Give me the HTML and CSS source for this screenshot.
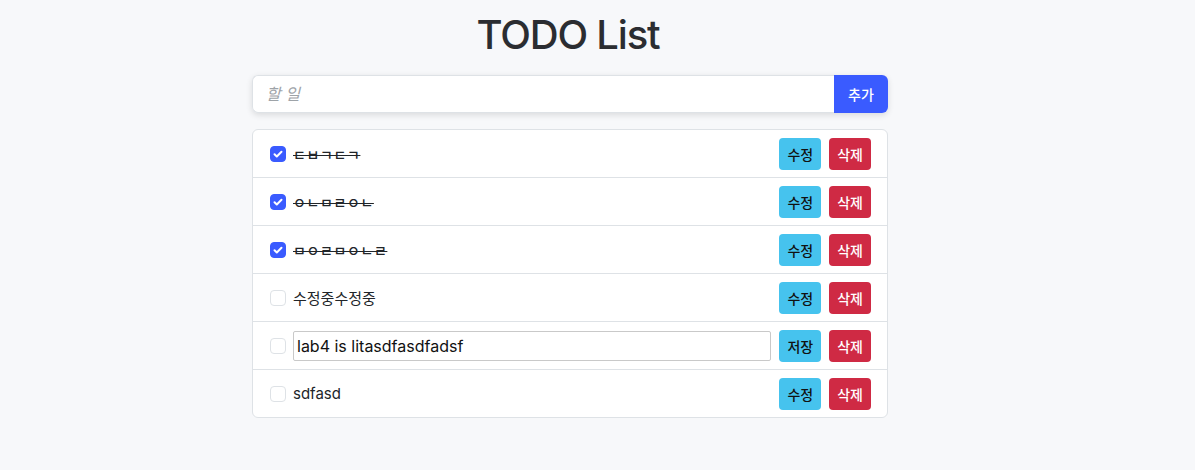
FILE: index.html
```html
<!DOCTYPE html>
<html lang="ko">
<head>
<meta charset="utf-8">
<title>TODO List</title>
<link rel="stylesheet" href="styles.css">
</head>
<body>
<main class="container">
  <h1 class="title">TODO List</h1>
  <form class="add-group">
    <input class="add-input" type="text" placeholder="할 일">
    <button class="add-btn" type="button">추가</button>
  </form>
  <ul class="todo-list">
    <li class="todo-item">
      <span class="check checked"><svg viewBox="0 0 16 16" width="16" height="16"><path d="M4.5 8.2l2.3 2.3 4.7-4.7" fill="none" stroke="#fff" stroke-width="2" stroke-linecap="round" stroke-linejoin="round"/></svg></span>
      <span class="todo-text done jamo">ㄷㅂㄱㄷㄱ</span>
      <span class="actions"><button class="btn btn-info">수정</button><button class="btn btn-danger">삭제</button></span>
    </li>
    <li class="todo-item">
      <span class="check checked"><svg viewBox="0 0 16 16" width="16" height="16"><path d="M4.5 8.2l2.3 2.3 4.7-4.7" fill="none" stroke="#fff" stroke-width="2" stroke-linecap="round" stroke-linejoin="round"/></svg></span>
      <span class="todo-text done jamo">ㅇㄴㅁㄹㅇㄴ</span>
      <span class="actions"><button class="btn btn-info">수정</button><button class="btn btn-danger">삭제</button></span>
    </li>
    <li class="todo-item">
      <span class="check checked"><svg viewBox="0 0 16 16" width="16" height="16"><path d="M4.5 8.2l2.3 2.3 4.7-4.7" fill="none" stroke="#fff" stroke-width="2" stroke-linecap="round" stroke-linejoin="round"/></svg></span>
      <span class="todo-text done jamo">ㅁㅇㄹㅁㅇㄴㄹ</span>
      <span class="actions"><button class="btn btn-info">수정</button><button class="btn btn-danger">삭제</button></span>
    </li>
    <li class="todo-item">
      <span class="check"></span>
      <span class="todo-text">수정중수정중</span>
      <span class="actions"><button class="btn btn-info">수정</button><button class="btn btn-danger">삭제</button></span>
    </li>
    <li class="todo-item">
      <span class="check"></span>
      <input class="edit-input" type="text" value="lab4 is litasdfasdfadsf">
      <span class="actions"><button class="btn btn-info">저장</button><button class="btn btn-danger">삭제</button></span>
    </li>
    <li class="todo-item">
      <span class="check"></span>
      <span class="todo-text">sdfasd</span>
      <span class="actions"><button class="btn btn-info">수정</button><button class="btn btn-danger">삭제</button></span>
    </li>
  </ul>
</main>
</body>
</html>
```
FILE: styles.css
```css
* { box-sizing: border-box; }
html, body { margin: 0; padding: 0; }
body {
  background: #f7f8fa;
  font-family: Inter, "Noto Sans CJK KR", sans-serif;
  color: #212529;
  font-size: 16px;
}
.container {
  width: 636px;
  margin-left: 252px;
  padding-top: 11px;
}
.title {
  margin: 0 0 16px;
  font-size: 40px;
  font-weight: 500;
  line-height: 48px;
  text-align: center;
  color: #2b2d31;
  letter-spacing: -1.2px;
  padding-right: 4px;
}
.add-group {
  display: flex;
  height: 38px;
  margin: 0 0 16px;
  border-radius: 6px;
  box-shadow: 0 2px 6px rgba(0,0,0,0.12);
}
.add-input {
  flex: 1;
  border: 1px solid #dee2e6;
  border-right: 0;
  border-radius: 6px 0 0 6px;
  padding: 0 13px;
  font: italic 16px Inter, "Noto Sans CJK KR", sans-serif;
  background: #fff;
  outline: none;
}
.add-input::placeholder { color: #9ea3a8; }
.add-btn {
  width: 54px;
  border: 0;
  border-radius: 0 6px 6px 0;
  background: #3a5bff;
  color: #fff;
  font: 500 14px "Noto Sans CJK KR", sans-serif;
}
.todo-list {
  list-style: none;
  margin: 0;
  padding: 0;
  background: #fff;
  border: 1px solid #dee2e6;
  border-radius: 6px;
}
.todo-item {
  display: flex;
  align-items: center;
  height: 48px;
  padding: 0 16px 0 17px;
  border-top: 1px solid #dee2e6;
}
.todo-item:first-child { border-top: 0; height: 47px; }
.check {
  flex: none;
  width: 16px;
  height: 16px;
  margin-right: 7px;
  border: 1px solid #dee2e6;
  border-radius: 4px;
  background: #fff;
  display: flex;
}
.check.checked {
  border-color: #3a5bff;
  background: #3a5bff;
}
.check svg { margin: -1px; }
.todo-text {
  flex: 1;
  font-size: 15px;
  color: #212529;
}
.todo-text.done { text-decoration: line-through; }
.jamo { font-size: 14px; letter-spacing: 0.6px; font-weight: 500; }
.edit-input {
  flex: 1;
  height: 30px;
  margin-right: 8px;
  border: 1px solid #c9c9c9;
  border-radius: 2px;
  padding: 0 3px;
  font: 16px Inter, "Noto Sans CJK KR", sans-serif;
  color: #111;
}
.actions { display: flex; gap: 8px; margin-left: auto; }
.btn {
  height: 32px;
  padding: 0 8px;
  border: 0;
  border-radius: 4px;
  font: 500 14px "Noto Sans CJK KR", sans-serif;
}
.btn-info { background: #46c3ee; color: #111; }
.btn-danger { background: #cf2a44; color: #fff; }
```
